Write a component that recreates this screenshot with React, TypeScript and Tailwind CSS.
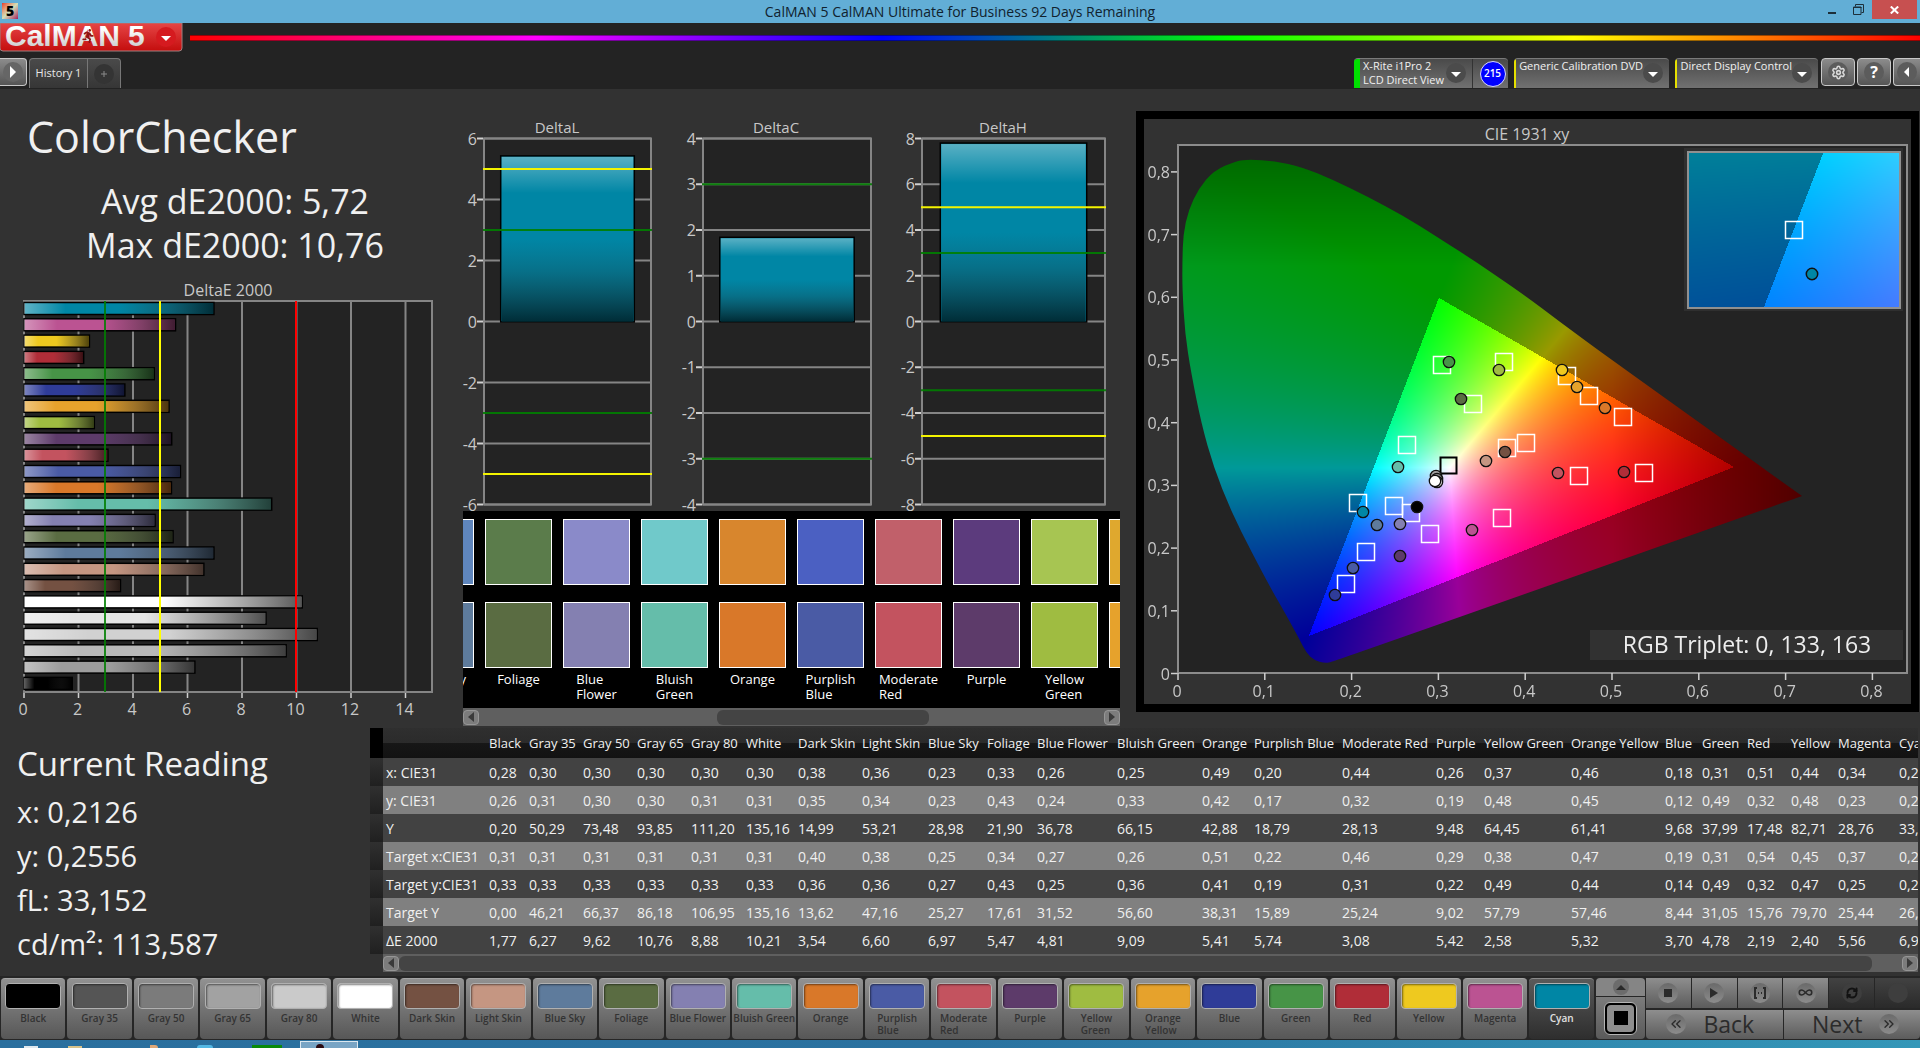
import React, { useEffect, useRef } from "react";
import { ChevronsLeft, ChevronsRight, Infinity as Loop, RefreshCw, Settings } from "lucide-react";
import { FaRunning } from "react-icons/fa";

interface Patch {
  name: string;
  lines?: string[];
  color: string;
  measured: string;
  bar?: string;
  col: number;
  values: string[];
}

const patches: Patch[] = [
  { name: "Black", color: "#000000", measured: "#000000", col: 40, values: ["0,28", "0,26", "0,20", "0,31", "0,33", "0,00", "1,77"] },
  { name: "Gray 35", color: "#555555", measured: "#555555", bar: "#9d9d9d", col: 54, values: ["0,30", "0,31", "50,29", "0,31", "0,33", "46,21", "6,27"] },
  { name: "Gray 50", color: "#7b7b7b", measured: "#7b7b7b", bar: "#b9b9b9", col: 54, values: ["0,30", "0,30", "73,48", "0,31", "0,33", "66,37", "9,62"] },
  { name: "Gray 65", color: "#a2a2a2", measured: "#a2a2a2", bar: "#d1d1d1", col: 54, values: ["0,30", "0,30", "93,85", "0,31", "0,33", "86,18", "10,76"] },
  { name: "Gray 80", color: "#cacaca", measured: "#cacaca", bar: "#e6e6e6", col: 55, values: ["0,30", "0,31", "111,20", "0,31", "0,33", "106,95", "8,88"] },
  { name: "White", color: "#ffffff", measured: "#ffffff", col: 52, values: ["0,30", "0,31", "135,16", "0,31", "0,33", "135,16", "10,21"] },
  { name: "Dark Skin", color: "#745142", measured: "#7a5548", col: 64, values: ["0,38", "0,35", "14,99", "0,40", "0,36", "13,62", "3,54"] },
  { name: "Light Skin", color: "#c59682", measured: "#c89a8c", col: 66, values: ["0,36", "0,34", "53,21", "0,38", "0,36", "47,16", "6,60"] },
  { name: "Blue Sky", color: "#5e7b9c", measured: "#5f86bd", col: 59, values: ["0,23", "0,23", "28,98", "0,25", "0,27", "25,27", "6,97"] },
  { name: "Foliage", color: "#5a6c42", measured: "#5b7c4b", col: 50, values: ["0,33", "0,43", "21,90", "0,34", "0,43", "17,61", "5,47"] },
  { name: "Blue Flower", lines: ["Blue", "Flower"], color: "#8480b1", measured: "#8a8ac9", col: 80, values: ["0,26", "0,24", "36,78", "0,27", "0,25", "31,52", "4,81"] },
  { name: "Bluish Green", lines: ["Bluish", "Green"], color: "#65bdaa", measured: "#70c9ca", col: 85, values: ["0,25", "0,33", "66,15", "0,26", "0,36", "56,60", "9,09"] },
  { name: "Orange", color: "#d97829", measured: "#d8862d", col: 52, values: ["0,49", "0,42", "42,88", "0,51", "0,41", "38,31", "5,41"] },
  { name: "Purplish Blue", lines: ["Purplish", "Blue"], color: "#4a5ba5", measured: "#4b60c2", col: 88, values: ["0,20", "0,17", "18,79", "0,22", "0,19", "15,89", "5,74"] },
  { name: "Moderate Red", lines: ["Moderate", "Red"], color: "#c3535f", measured: "#c1606a", col: 94, values: ["0,44", "0,32", "28,13", "0,46", "0,31", "25,24", "3,08"] },
  { name: "Purple", color: "#5d3b6a", measured: "#5c3b7d", col: 48, values: ["0,26", "0,19", "9,48", "0,29", "0,22", "9,02", "5,42"] },
  { name: "Yellow Green", lines: ["Yellow", "Green"], color: "#9fbc41", measured: "#a7c552", col: 87, values: ["0,37", "0,48", "64,45", "0,38", "0,49", "57,79", "2,58"] },
  { name: "Orange Yellow", lines: ["Orange", "Yellow"], color: "#e6a22c", measured: "#dfa82e", col: 94, values: ["0,46", "0,45", "61,41", "0,47", "0,44", "57,46", "5,32"] },
  { name: "Blue", color: "#2f3c98", measured: "#2f3c98", col: 37, values: ["0,18", "0,12", "9,68", "0,19", "0,14", "8,44", "3,70"] },
  { name: "Green", color: "#479447", measured: "#479447", col: 45, values: ["0,31", "0,49", "37,99", "0,31", "0,49", "31,05", "4,78"] },
  { name: "Red", color: "#b02d38", measured: "#b02d38", col: 44, values: ["0,51", "0,32", "17,48", "0,54", "0,32", "15,76", "2,19"] },
  { name: "Yellow", color: "#eec91f", measured: "#eec91f", col: 47, values: ["0,44", "0,48", "82,71", "0,45", "0,47", "79,70", "2,40"] },
  { name: "Magenta", color: "#bb5392", measured: "#bb5392", col: 61, values: ["0,34", "0,23", "28,76", "0,37", "0,25", "25,44", "5,56"] },
  { name: "Cyan", color: "#0086a5", measured: "#0086a5", col: 50, values: ["0,21", "0,26", "33,15", "0,21", "0,27", "26,12", "6,97"] },
];

const rowLabels = ["x: CIE31", "y: CIE31", "Y", "Target x:CIE31", "Target y:CIE31", "Target Y", "ΔE 2000"];

const toNumber = (v: string) => parseFloat(v.replace(",", "."));

/* ---------- window chrome ---------- */

const TitleBar = () => (
  <div className="relative flex h-[23px] items-center justify-center bg-[#62aed6] text-sm text-[#10222e]">
    <div className="absolute left-[2px] top-[3px] flex h-4 w-4 items-center justify-center bg-gradient-to-br from-[#e5352b] via-[#cfe0b8] to-[#a01060] text-sm font-extrabold leading-none text-black">
      5
    </div>
    <span>CalMAN 5 CalMAN Ultimate for Business 92 Days Remaining</span>
    <div className="absolute right-[3px] top-0 flex h-[19px]">
      <button aria-label="Minimize" className="flex w-6 items-center justify-center">
        <svg width="8" height="14"><rect y="9" width="8" height="2" fill="#1d2f3a" /></svg>
      </button>
      <button aria-label="Restore" className="flex w-7 items-center justify-center">
        <svg width="11" height="11" fill="none" stroke="#1d2f3a">
          <path d="M2.5 2.5V.5h8v8h-2M.5 3h7.5v7.500H.5z" />
          <path d="M.5 3.500h8" />
        </svg>
      </button>
      <button aria-label="Close" className="flex w-[45px] items-center justify-center bg-[#c75050]">
        <svg width="9" height="8" stroke="#fff" strokeWidth="2"><path d="M.8.500l7.400 7M8.200.500l-7.400 7" /></svg>
      </button>
    </div>
  </div>
);

const Logo = () => (
  <button aria-label="CalMAN 5 menu" className="h-[29px] w-[183px]">
    <svg width="183" height="29" viewBox="0 0 183 29" className="overflow-visible">
      <defs>
        <linearGradient id="logoRed" x2="0" y2="1">
          <stop offset="0" stopColor="#e64646" />
          <stop offset="1" stopColor="#c40d0d" />
        </linearGradient>
        <linearGradient id="logoText" x2="0" y2="1">
          <stop offset="0.300" stopColor="#ffffff" />
          <stop offset="0.900" stopColor="#c9c9c9" />
        </linearGradient>
      </defs>
      <path d="M0 0h182v25q0 3-3 3H3q-3 0-3-3z" fill="url(#logoRed)" stroke="#a08080" />
      <text x="5" y="23" fontSize="30" fontWeight="700" className="font-['Liberation_Sans']" fill="url(#logoText)">CalMAN</text>
      <text x="128" y="23" fontSize="30" fontWeight="700" className="font-['Liberation_Sans']" fill="url(#logoText)">5</text>
      <FaRunning x="81" y="6" size="14" color="#8d1515" />
      <circle cx="166" cy="14" r="10" fill="#d51a1f" />
      <path d="M161 13h10l-5 5z" fill="#fff" />
    </svg>
  </button>
);

const DropArrow = () => (
  <svg width="20" height="20" className="mt-1 shrink-0">
    <circle cx="10" cy="10" r="10" fill="#4b4b4b" />
    <path d="M5 9h10l-5 5z" fill="#fff" />
  </svg>
);

interface DeviceProps {
  lines: string[];
  width: string;
  accent: string;
  children?: React.ReactNode;
}

const Device: React.FC<DeviceProps> = ({ lines, width, accent, children }) => (
  <div className={`flex h-[30px] overflow-hidden rounded-t border-t border-[#7a7a7a] bg-gradient-to-b from-[#4a4a4a] to-[#717171] ${width}`}>
    <div className={`w-[6px] ${accent}`} />
    <button className="flex flex-1 justify-between pl-[3px] pr-[6px] text-left text-[11px] leading-[14px] text-[#f0f0f0]">
      <span className="whitespace-nowrap">
        {lines.map((l) => (
          <span key={l} className="block">{l}</span>
        ))}
      </span>
      <DropArrow />
    </button>
    {children}
  </div>
);

const squareButton =
  "flex h-[28px] w-[34px] items-center justify-center rounded border border-[#c8c8c8] bg-gradient-to-b from-[#8c8c8c] to-[#555555]";

const Header = () => (
  <header className="bg-[#232323]">
    <div className="flex h-[35px] gap-[7px]">
      <Logo />
      <div className="mt-3 h-[6px] flex-1 border-y border-black/40 bg-[linear-gradient(90deg,#f00_0%,#f0f_20%,#00f_40%,#0f0_60%,#ff0_80%,#f00_100%)]" />
    </div>
    <div className="flex h-[31px] items-start justify-between">
      <div className="flex">
        <button aria-label="Expand" className="flex h-[28px] w-[27px] items-center justify-center rounded-r border border-l-0 border-[#c8c8c8] bg-gradient-to-b from-[#8c8c8c] to-[#555555]">
          <svg width="20" height="20"><circle cx="10" cy="10" r="10" fill="#666" /><path d="M7 4l6 6-6 6z" fill="#fff" /></svg>
        </button>
        <div className="ml-[2px] flex h-[30px] overflow-hidden rounded-t border border-b-0 border-[#777] bg-gradient-to-b from-[#4a4a4a] to-[#363636]">
          <button className="w-[58px] border-r border-[#777] text-center text-[11px] text-[#e8e8e8]">History 1</button>
          <button aria-label="Add history" className="flex w-[32px] items-center justify-center">
            <svg width="20" height="20"><circle cx="10" cy="10" r="10" fill="#343434" /><path d="M10 7v6M7 10h6" stroke="#8a8a8a" /></svg>
          </button>
        </div>
      </div>
      <div className="flex">
        <Device lines={["X-Rite i1Pro 2", "LCD Direct View"]} width="w-[154px]" accent="bg-[#00e000]">
          <div className="flex w-[36px] items-center justify-center border-l border-[#333] pl-1">
            <div className="flex h-[26px] w-[26px] items-center justify-center rounded-full border border-[#d8d8ff] bg-[#0000ff] text-[10px] font-semibold text-white">215</div>
          </div>
        </Device>
        <div className="w-[6px]" />
        <Device lines={["Generic Calibration DVD"]} width="w-[155px]" accent="bg-[#e6e000]" />
        <div className="w-[6px]" />
        <Device lines={["Direct Display Control"]} width="w-[143px]" accent="bg-[#e6e000]" />
        <div className="ml-[3px] flex gap-[2px]">
          <button aria-label="Settings" className={squareButton}>
            <span className="flex h-5 w-5 items-center justify-center rounded-full bg-[#5c5c5c]">
              <Settings size={15} color="#d8d8d8" strokeWidth={2.5} />
            </span>
          </button>
          <button aria-label="Help" className={squareButton}>
            <span className="flex h-5 w-5 items-center justify-center rounded-full bg-[#5c5c5c] text-base font-bold leading-none text-white">?</span>
          </button>
          <button aria-label="Collapse" className="flex h-[28px] w-[27px] items-center justify-center rounded-l border border-r-0 border-[#c8c8c8] bg-gradient-to-b from-[#8c8c8c] to-[#555555]">
            <svg width="20" height="20"><circle cx="10" cy="10" r="10" fill="#5c5c5c" /><path d="M12 5l-5 5 5 5z" fill="#fff" /></svg>
          </button>
        </div>
      </div>
    </div>
  </header>
);

/* ---------- charts ---------- */

const DeltaEChart = () => {
  const zero = 24;
  const unit = 27.25;
  const bars = [...patches].reverse();
  return (
    <svg viewBox="0 280 460 448" className="mt-[13px] w-full" fontSize="16" fill="#c8c8c8">
      <defs>
        <linearGradient id="shadeRight">
          <stop offset="0" stopColor="#fff" stopOpacity="0.380" />
          <stop offset="0.220" stopColor="#fff" stopOpacity="0" />
          <stop offset="0.500" stopColor="#303030" stopOpacity="0" />
          <stop offset="0.780" stopColor="#202020" stopOpacity="0.380" />
          <stop offset="1" stopColor="#000" stopOpacity="0.660" />
        </linearGradient>
      </defs>
      <text x="228" y="296" textAnchor="middle">DeltaE 2000</text>
      <rect x="24" y="301" width="408" height="391" fill="#232323" stroke="#858585" strokeWidth="2" />
      {[2, 4, 6, 8, 10, 12, 14].map((v) => (
        <path key={v} d={`M${zero + v * unit} 302V691`} stroke="#858585" strokeWidth="2" />
      ))}
      {bars.map((p, i) => {
        const w = toNumber(p.values[6]) * unit;
        const y = 302.500 + i * 16.300;
        return (
          <g key={p.name}>
            <rect x={zero} y={y} width={w} height="12" fill={p.bar ?? p.color} stroke="#000" strokeWidth="1.500" />
            <rect x={zero} y={y + 0.700} width={w - 0.700} height="10.600" fill="url(#shadeRight)" />
          </g>
        );
      })}
      <path d="M105 301V692" stroke="#007f00" strokeWidth="2" strokeOpacity="0.850" />
      <path d="M160 301V692" stroke="#ffff00" strokeWidth="2" />
      <path d="M296 301V692" stroke="#ff0000" strokeWidth="2" />
      {[0, 2, 4, 6, 8, 10, 12, 14].map((v) => (
        <g key={v}>
          <path d={`M${zero + v * unit} 693v5`} stroke="#d0d0d0" strokeWidth="1.500" />
          <text x={zero + v * unit - 1} y="715" textAnchor="middle">{v}</text>
        </g>
      ))}
    </svg>
  );
};

interface DeltaProps {
  title: string;
  left: number;
  right: number;
  titleX: number;
  max: number;
  step: number;
  value: number;
  warn?: boolean;
}

const DeltaPlot: React.FC<DeltaProps> = ({ title, left, right, titleX, max, step, value, warn }) => {
  const top = 138.5;
  const unit = 366 / (2 * max);
  const y = (v: number) => top + (max - v) * unit;
  const ticks: number[] = [];
  for (let v = max; v >= -max; v -= step) ticks.push(v);
  const inset = (right - left) * 0.100;
  const barTop = y(value);
  return (
    <g>
      <text x={titleX} y="133" textAnchor="middle" fontSize="15">{title}</text>
      <rect x={left} y={top} width={right - left} height="366" fill="#232323" />
      {ticks.map((v) => (
        <g key={v}>
          <path d={`M${left} ${y(v)}H${right}`} stroke="#858585" strokeWidth="2" />
          <path d={`M${left - 7} ${y(v)}h6`} stroke="#d0d0d0" strokeWidth="2" />
          <text x={left - 7} y={y(v) + 6} textAnchor="end" fontSize="16">{v}</text>
        </g>
      ))}
      <rect x={left} y={top} width={right - left} height="366" fill="none" stroke="#858585" strokeWidth="2" />
      <rect x={left + inset} y={barTop} width={right - left - 2 * inset} height={322 - barTop} fill="#0086a5" stroke="#000" strokeWidth="1.500" />
      <rect x={left + inset + 1} y={barTop + 1} width={right - left - 2 * inset - 2} height={320 - barTop} fill="url(#shadeDown)" />
      {[3, -3].map((v) => (
        <path key={v} d={`M${left - 1} ${y(v)}H${right + 1}`} stroke="#007f00" strokeWidth="2" strokeOpacity="0.900" />
      ))}
      {warn && [5, -5].map((v) => (
        <path key={v} d={`M${left - 1} ${y(v)}H${right + 1}`} stroke="#f4f400" strokeWidth="2" />
      ))}
    </g>
  );
};

const DeltaCharts = () => (
  <svg viewBox="460 110 664 401" className="w-full overflow-visible" fill="#c8c8c8">
    <defs>
      <linearGradient id="shadeDown" x2="0" y2="1">
        <stop offset="0" stopColor="#fff" stopOpacity="0.350" />
        <stop offset="0.220" stopColor="#fff" stopOpacity="0" />
        <stop offset="0.500" stopColor="#303030" stopOpacity="0" />
        <stop offset="0.700" stopColor="#202020" stopOpacity="0.220" />
        <stop offset="1" stopColor="#000" stopOpacity="0.660" />
      </linearGradient>
    </defs>
    <DeltaPlot title="DeltaL" left={484} right={651} titleX={557} max={6} step={2} value={5.430} warn />
    <DeltaPlot title="DeltaC" left={703} right={871} titleX={776} max={4} step={1} value={1.840} />
    <DeltaPlot title="DeltaH" left={922} right={1105} titleX={1003} max={8} step={2} value={7.800} warn />
  </svg>
);

/* ---------- scroll bars ---------- */

const ScrollBar: React.FC<{ thumb: string }> = ({ thumb }) => (
  <div className="flex h-[18px] items-center bg-[#5f5f5f]">
    <button aria-label="Scroll left" className="flex h-[15px] w-[16px] items-center justify-center rounded border border-[#969696] bg-[#7c7c7c]">
      <svg width="6" height="10"><path d="M6 0v10L0 5z" fill="#3a3a3a" /></svg>
    </button>
    <div className="flex flex-1">
      <div className={`h-[15px] rounded-md bg-[#444444] ${thumb}`} />
    </div>
    <button aria-label="Scroll right" className="flex h-[15px] w-[16px] items-center justify-center rounded border border-[#969696] bg-[#7c7c7c]">
      <svg width="6" height="10"><path d="M0 0v10l6-5z" fill="#3a3a3a" /></svg>
    </button>
  </div>
);

const SwatchStrip = () => (
  <div className="ml-[3px] mr-1">
    <div className="flex h-[197px] justify-center gap-[11px] overflow-hidden bg-black pt-2">
      {patches.slice(8, 18).map((p) => (
        <div key={p.name} className="flex w-[67px] shrink-0 flex-col items-center">
          <div className="h-[66px] w-full border border-white" style={{ backgroundColor: p.measured }} />
          <div className="mt-[17px] h-[66px] w-full border border-white" style={{ backgroundColor: p.color }} />
          <div className="mt-1 whitespace-nowrap text-[13px] leading-[15px] text-white">
            {(p.lines ?? [p.name]).map((l) => (
              <div key={l}>{l}</div>
            ))}
          </div>
        </div>
      ))}
    </div>
    <ScrollBar thumb="ml-[38%] w-[34%]" />
  </div>
);

/* ---------- CIE diagram ---------- */

const locus: [number, number][] = [
  [0.067, 0.818], [0.082, 0.82], [0.111, 0.818], [0.143, 0.808], [0.178, 0.788], [0.218, 0.761], [0.259, 0.731],
  [0.299, 0.696], [0.346, 0.654], [0.398, 0.605], [0.439, 0.562], [0.479, 0.521], [0.526, 0.474], [0.642, 0.359],
  [0.719, 0.283], [0.719, 0.283], [0.178, 0.018], [0.169, 0.016], [0.157, 0.021], [0.148, 0.032], [0.14, 0.054],
  [0.125, 0.092], [0.108, 0.133], [0.085, 0.193], [0.061, 0.259], [0.041, 0.329], [0.027, 0.398], [0.015, 0.48],
  [0.008, 0.543], [0.005, 0.613], [0.005, 0.657], [0.006, 0.701], [0.012, 0.739], [0.024, 0.774], [0.041, 0.802],
];

// linear sRGB for a chromaticity, scaled so the strongest channel is full; dimmed outside the gamut
const chromaToRgb = (x: number, y: number) => {
  const X = x / y;
  const Z = (1 - x - y) / y;
  const rgb = [
    3.2406 * X - 1.5372 - 0.4986 * Z,
    -0.9689 * X + 1.8758 + 0.0415 * Z,
    0.0557 * X - 0.204 + 1.057 * Z,
  ];
  const inside = Math.min(...rgb) >= 0;
  const peak = Math.max(...rgb);
  let level = inside ? 1 : 0.6;
  if (x > 0.5) level *= Math.max(0.5, 1 - (x - 0.5) * 2.2);
  if (y > 0.65) level *= 1 - (y - 0.65) * 1.8;
  return rgb.map((c) => (Math.max(0, c) / peak) * 255 * level);
};

interface GamutProps {
  width: number;
  height: number;
  x0: number;
  y0: number;
  perX: number;
  perY: number;
  clip?: boolean;
}

const GamutCanvas: React.FC<GamutProps> = ({ width, height, x0, y0, perX, perY, clip }) => {
  const ref = useRef<HTMLCanvasElement>(null);

  useEffect(() => {
    const ctx = ref.current?.getContext("2d");
    if (!ctx) return;
    const image = ctx.createImageData(width, height);
    for (let py = 0; py < height; py++) {
      for (let px = 0; px < width; px++) {
        const y = Math.max(0.002, y0 - py / perY);
        const [r, g, b] = chromaToRgb(x0 + px / perX, y);
        image.data.set([r, g, b, 255], (py * width + px) * 4);
      }
    }
    ctx.globalCompositeOperation = "source-over";
    ctx.putImageData(image, 0, 0);
    if (clip) {
      const pts = locus.map(([x, y]) => [(x - x0) * perX, (y0 - y) * perY]);
      const mid = (i: number) => {
        const a = pts[i % pts.length];
        const b = pts[(i + 1) % pts.length];
        return [(a[0] + b[0]) / 2, (a[1] + b[1]) / 2];
      };
      ctx.beginPath();
      ctx.moveTo(mid(0)[0], mid(0)[1]);
      for (let i = 1; i <= pts.length; i++) {
        const p = pts[i % pts.length];
        const m = mid(i);
        ctx.quadraticCurveTo(p[0], p[1], m[0], m[1]);
      }
      ctx.globalCompositeOperation = "destination-in";
      ctx.fill();
    }
  }, [width, height, x0, y0, perX, perY, clip]);

  return <canvas ref={ref} width={width} height={height} className="block" />;
};

const targets = [
  [1441, 364], [1503, 361], [1566, 375], [1588, 395], [1622, 416], [1472, 403], [1406, 444], [1506, 447], [1525, 442],
  [1578, 475], [1643, 472], [1501, 517], [1357, 502], [1410, 512], [1393, 505], [1429, 533], [1365, 551], [1345, 583],
];

const readings: [number, number, string][] = [
  [1448, 361, "#479447"], [1498, 369, "#9fbc41"], [1561, 369, "#eec91f"], [1576, 386, "#e6a22c"], [1604, 407, "#d97829"],
  [1460, 398, "#5a6c42"], [1397, 466, "#65bdaa"], [1485, 460, "#c59682"], [1504, 451, "#745142"], [1557, 472, "#c3535f"],
  [1623, 471, "#b02d38"], [1435, 475, "#a2a2a2"], [1436, 478, "#7b7b7b"], [1436, 481, "#cacaca"], [1434, 480, "#ffffff"],
  [1362, 511, "#0086a5"], [1416, 506, "#000000"], [1376, 524, "#5e7b9c"], [1399, 523, "#8480b1"], [1399, 555, "#5d3b6a"],
  [1471, 529, "#bb5392"], [1352, 567, "#4a5ba5"], [1334, 594, "#2f3c98"],
];

const axis = [0, 1, 2, 3, 4, 5, 6, 7, 8];

const CieDiagram = () => (
  <div className="ml-3 mr-px mt-[22px] border-8 border-black bg-[#323232]">
    <svg viewBox="1144 119 767 585" className="block w-full" fontSize="16" fill="#c8c8c8">
      <text x="1527" y="140" textAnchor="middle">CIE 1931 xy</text>
      <rect x="1178" y="145" width="729" height="528" fill="#232323" stroke="#8c8c8c" strokeWidth="2" />
      <foreignObject x="1178" y="147" width="640" height="526">
        <GamutCanvas width={640} height={526} x0={0} y0={0.84} perX={868} perY={626.5} clip />
      </foreignObject>
      {axis.map((v) => (
        <g key={v}>
          <path d={`M${1178 + v * 86.8} 673v7`} stroke="#d0d0d0" strokeWidth="1.500" />
          <text x={1177 + v * 86.8} y="697" textAnchor="middle">{v === 0 ? "0" : `0,${v}`}</text>
          <path d={`M1177 ${673.5 - v * 62.7}h-6`} stroke="#d0d0d0" strokeWidth="1.500" />
          <text x="1170" y={679.5 - v * 62.7} textAnchor="end">{v === 0 ? "0" : `0,${v}`}</text>
        </g>
      ))}
      <g transform="translate(1 1)">
        {targets.map(([x, y]) => (
          <rect key={`${x}-${y}`} x={x - 8.5} y={y - 8.5} width="17" height="17" fill="none" stroke="#fff" strokeWidth="1.500" />
        ))}
        <rect x="1439.500" y="456.500" width="16" height="16" fill="none" stroke="#000" strokeWidth="2" />
        {readings.map(([x, y, color]) => (
          <circle key={`${x}-${y}`} cx={x} cy={y} r="5.700" fill={color} stroke="#101010" strokeWidth="1.300" />
        ))}
      </g>
      <rect x="1684" y="148" width="219" height="163" fill="#2f2f2f" />
      <foreignObject x="1688" y="152" width="212" height="156">
        <GamutCanvas width={212} height={156} x0={0.18} y0={0.3018} perX={3628} perY={2620} />
      </foreignObject>
      <rect x="1688" y="152" width="212" height="156" fill="none" stroke="#909090" strokeWidth="2" />
      <rect x="1785.500" y="221.500" width="17" height="17" fill="none" stroke="#fff" strokeWidth="1.500" />
      <circle cx="1812" cy="274" r="5.700" fill="#0086a5" stroke="#101010" strokeWidth="1.500" />
      <rect x="1590" y="630" width="313" height="30" fill="#313131" />
      <text x="1747" y="653" textAnchor="middle" fontSize="23" fill="#ededed">RGB Triplet: 0, 133, 163</text>
    </svg>
  </div>
);

/* ---------- readings ---------- */

const CurrentReading = () => (
  <div className="w-[370px] shrink-0 pl-[17px] pt-[14px] text-[29px] leading-[44px] text-[#f0f0f0]">
    <h2 className="mb-1 text-[33px] leading-[44px]">Current Reading</h2>
    <p>x: 0,2126</p>
    <p>y: 0,2556</p>
    <p>fL: 33,152</p>
    <p>cd/m²: 113,587</p>
  </div>
);

const DataTable = () => (
  <div className="mr-[2px] min-w-0 flex-1">
    <div className="overflow-hidden">
      <table className="w-[1550px] table-fixed text-left text-sm text-[#f0f0f0]">
        <colgroup>
          <col className="w-[13px]" />
          <col className="w-[102px]" />
          {patches.map((p) => (
            <col key={p.name} style={{ width: p.col }} />
          ))}
        </colgroup>
        <thead>
          <tr className="h-[30px] bg-[linear-gradient(#2f2f2f_0%,#2b2b2b_50%,#171717_50%,#121212_100%)] text-[13px]">
            <td className="bg-black" />
            <td />
            {patches.map((p) => (
              <th key={p.name} scope="col" className="whitespace-nowrap p-0 pl-1 pt-px font-normal">{p.name}</th>
            ))}
          </tr>
        </thead>
        <tbody>
          {rowLabels.map((label, r) => (
            <tr key={label} className="h-[28px] odd:bg-[#424242] even:bg-[#808080]">
              <td className="bg-gradient-to-b from-[#303030] to-[#202020]" />
              <th scope="row" className="whitespace-nowrap p-0 pl-[3px] pt-px font-normal">{label}</th>
              {patches.map((p) => (
                <td key={p.name} className="whitespace-nowrap p-0 pl-1 pt-px">{p.values[r]}</td>
              ))}
            </tr>
          ))}
        </tbody>
      </table>
    </div>
    <div className="ml-[13px]">
      <ScrollBar thumb="w-[98%]" />
    </div>
  </div>
);

/* ---------- bottom bar ---------- */

const PatchButton: React.FC<{ patch: Patch; selected: boolean }> = ({ patch, selected }) => {
  const lines = patch.name === "Blue Flower" || patch.name === "Bluish Green" ? [patch.name] : patch.lines ?? [patch.name];
  return (
    <button
      className={`flex min-w-0 flex-1 flex-col items-center overflow-hidden rounded border-t pt-1 ${
        selected
          ? "border-[#8a8a8a] bg-gradient-to-b from-[#5a5a5a] to-[#2e2e2e] text-[#e0e0e0]"
          : "border-[#a5a5a5] bg-gradient-to-b from-[#919191] to-[#575757] text-[#333333]"
      }`}
    >
      <span
        className="h-[26px] w-[56px] shrink-0 rounded border border-[#b0b0b0] shadow-[inset_1px_1px_2px_rgba(0,0,0,0.500)]"
        style={{ backgroundColor: patch.color }}
      />
      <span className="mt-[3px] whitespace-nowrap text-left text-[10px] font-semibold leading-3">
        {lines.map((l) => (
          <span key={l} className="block">{l}</span>
        ))}
      </span>
    </button>
  );
};

const keyCell = "flex flex-1 items-center justify-center bg-gradient-to-b from-[#8e8e8e] to-[#5c5c5c]";
const darkCell = "flex flex-1 items-center justify-center bg-gradient-to-b from-[#424242] to-[#2a2a2a]";
const knob = "flex h-5 w-5 items-center justify-center rounded-full bg-gradient-to-b from-[#6a6a6a] to-[#8c8c8c]";

const BottomBar = () => (
  <footer className="flex h-[64px] bg-[#262626] pb-px pt-[2px]">
    <div className="flex flex-1 gap-[2px] pl-px">
      {patches.map((p) => (
        <PatchButton key={p.name} patch={p} selected={p.name === "Cyan"} />
      ))}
    </div>
    <div className="ml-[2px] flex w-[49px] flex-col gap-px">
      <button aria-label="Show more" className="flex h-[18px] items-center justify-center rounded-t bg-[#858585]">
        <span className="flex h-4 w-4 items-center justify-center rounded-full bg-[#6c6c6c]">
          <svg width="10" height="5"><path d="M0 5h10L5 0z" fill="#2a2a2a" /></svg>
        </span>
      </button>
      <button aria-label="Window pattern" className="flex flex-1 items-center justify-center rounded-b bg-gradient-to-b from-[#7c7c7c] to-[#5a5a5a]">
        <span className="flex h-[33px] w-[33px] items-center justify-center rounded-md border border-[#b5b5b5] bg-black p-[2px]">
          <span className="flex h-full w-full items-center justify-center rounded bg-[#8e8e8e]">
            <span className="h-[14px] w-[14px] bg-black" />
          </span>
        </span>
      </button>
    </div>
    <div className="ml-px flex w-[274px] flex-col gap-[2px]">
      <div className="flex flex-1 gap-px">
        <button aria-label="Stop" className={keyCell}>
          <span className={knob}><span className="h-2 w-2 bg-[#2b2b2b]" /></span>
        </button>
        <button aria-label="Read once" className={keyCell}>
          <span className={knob}><svg width="10" height="10"><path d="M1 0v10l8-5z" fill="#2b2b2b" /></svg></span>
        </button>
        <button aria-label="Read series" className={keyCell}>
          <span className={knob}>
            <svg width="14" height="12" fill="none" stroke="#2b2b2b" strokeWidth="2">
              <path d="M4 1H2v10h2M10 1h2v10h-2M5 6h1M8 6h1" />
            </svg>
          </span>
        </button>
        <button aria-label="Read continuously" className={keyCell}>
          <span className={knob}><Loop size={15} color="#2b2b2b" strokeWidth={2.5} /></span>
        </button>
        <button aria-label="Refresh" className={darkCell}>
          <span className="flex h-5 w-5 items-center justify-center rounded-full bg-[#3e3e3e]">
            <RefreshCw size={12} color="#121212" strokeWidth={4} />
          </span>
        </button>
        <button aria-label="Record" className={darkCell}>
          <span className="h-5 w-5 rounded-full bg-[#3e3e3e]" />
        </button>
      </div>
      <div className="flex flex-1 gap-px text-[23px] font-medium leading-none text-[#2b2b2b]">
        <button className={`${keyCell} gap-[17px] rounded-bl pr-2`}>
          <span className={knob}><ChevronsLeft size={16} /></span>
          Back
        </button>
        <button className={`${keyCell} gap-[17px] rounded-br pl-2`}>
          Next
          <span className={knob}><ChevronsRight size={16} /></span>
        </button>
      </div>
    </div>
  </footer>
);

const Taskbar = () => (
  <div className="flex h-2 items-end gap-[30px] overflow-hidden bg-gradient-to-r from-[#2a6f9e] via-[#2a72a0] to-[#3497b8] pl-[24px]">
    <div className="h-[2px] w-[14px] bg-[#dfe8ee]" />
    <div className="h-[2px] w-[14px] bg-[#d9c38a]" />
    <div className="ml-[38px] h-[3px] w-[8px] rounded-tr-full bg-[#e0a877]" />
    <div className="ml-[9px] h-[3px] w-[16px] rounded-t-full bg-[#54b8e4]" />
    <div className="ml-[9px] h-[3px] w-[30px] bg-[#0a8a0a]" />
    <div className="-ml-[12px] flex h-[7px] w-[58px] items-end border border-b-0 border-[#dbe7ef] bg-[#78a4c4] pl-[15px]">
      <div className="h-1 w-2 rounded-t-full bg-[#2a0a10]" />
    </div>
  </div>
);

const App: React.FC = () => (
  <div className="flex min-h-screen flex-col overflow-hidden bg-[#323232] font-['Open_Sans','Noto_Sans',sans-serif]">
    <TitleBar />
    <Header />
    <main className="flex-1">
      <div className="grid grid-cols-[minmax(0,460fr)_minmax(0,664fr)_minmax(0,796fr)]">
        <section>
          <h1 className="pl-[27px] pt-[18px] text-[43px] leading-[60px] text-[#f0f0f0]">ColorChecker</h1>
          <div className="mt-3 w-full pl-[10px] text-center text-[34px] leading-[44px] text-[#f0f0f0]">
            <p>Avg dE2000: 5,72</p>
            <p>Max dE2000: 10,76</p>
          </div>
          <DeltaEChart />
        </section>
        <section className="pt-[21px]">
          <DeltaCharts />
          <SwatchStrip />
        </section>
        <section>
          <CieDiagram />
        </section>
      </div>
      <div className="flex">
        <CurrentReading />
        <DataTable />
      </div>
    </main>
    <BottomBar />
    <Taskbar />
  </div>
);

export default App;
